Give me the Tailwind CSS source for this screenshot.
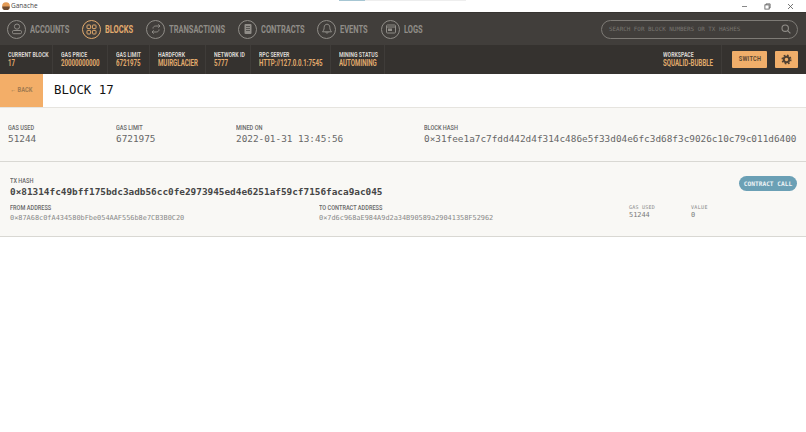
<!DOCTYPE html>
<html lang="en">
<head>
  <meta charset="UTF-8" />
  <title>Ganache</title>
  <script src="https://cdn.jsdelivr.net/npm/@tailwindcss/browser@4"></script>
</head>
<body class="h-[432px] w-[806px] overflow-hidden bg-white font-['Roboto',sans-serif]">
<div class="opacity-[.99]">
  <!-- title bar -->
  <div class="relative flex h-[12px] items-center bg-white">
    <svg class="ml-[2px] h-[8px] w-[8px]" viewBox="0 0 10 10"><circle cx="5" cy="5" r="4.8" fill="#e39a55"/><path d="M.2 5.6h9.6a4.8 4.8 0 0 1-9.6 0z" fill="#6d4a30"/></svg>
    <span class="ml-[1px] font-['Open_Sans',sans-serif] text-[6.5px] text-[#444]">Ganache</span>
    <div class="absolute top-0 left-[339px] flex h-[1px]">
      <div class="w-[26px] bg-[#a5c6d3]"></div>
      <div class="w-[101px] bg-[#eeeeee]"></div>
    </div>
    <div class="ml-auto flex items-center">
      <svg class="h-[7px] w-[7px]" viewBox="0 0 7 7" fill="none" stroke="#888"><path d="M1 3.5h5"/></svg>
      <svg class="ml-[16px] h-[7px] w-[7px]" viewBox="0 0 7 7" fill="none" stroke="#555" stroke-width=".8"><rect x=".9" y="1.9" width="4.2" height="4.2"/><path d="M2 1.9V.9h4.1V5h-1"/></svg>
      <svg class="mr-[12px] ml-[16px] h-[7px] w-[7px]" viewBox="0 0 7 7" fill="none" stroke="#555" stroke-width=".8"><path d="M1 1l5 5M6 1L1 6"/></svg>
    </div>
  </div>

  <!-- nav -->
  <div class="flex h-[33px] items-center justify-between border-t border-[#35322f] bg-[#3f3c39] pr-[8px] pl-[7px]">
    <div class="flex items-center text-[10px] font-bold text-[#8f8c87]">
      <div class="flex w-[75px] items-center gap-[4px]">
        <div class="flex h-[19px] w-[19px] shrink-0 items-center justify-center rounded-full border border-[#8f8c87]">
          <svg class="h-[12px] w-[12px]" viewBox="0 0 12 12" fill="none" stroke="#8f8c87"><circle cx="6" cy="3.6" r="2.6"/><rect x="1.5" y="7.5" width="9" height="3.2" rx="1.2"/></svg>
        </div>
        <span class="origin-left scale-x-[.75] whitespace-nowrap">ACCOUNTS</span>
      </div>
      <div class="flex w-[64px] items-center gap-[4px] text-[#e2aa6c]">
        <div class="flex h-[19px] w-[19px] shrink-0 items-center justify-center rounded-full border border-[#e2aa6c]">
          <svg class="h-[11px] w-[11px]" viewBox="0 0 11 11" fill="none" stroke="#e2aa6c"><rect x="1" y="1" width="3.6" height="3.6" rx=".7"/><rect x="6.4" y="1" width="3.6" height="3.6" rx=".7"/><rect x="1" y="6.4" width="3.6" height="3.6" rx=".7"/><rect x="6.4" y="6.4" width="3.6" height="3.6" rx=".7"/></svg>
        </div>
        <span class="origin-left scale-x-[.75] whitespace-nowrap">BLOCKS</span>
      </div>
      <div class="flex w-[92px] items-center gap-[4px]">
        <div class="flex h-[19px] w-[19px] shrink-0 items-center justify-center rounded-full border border-[#8f8c87]">
          <svg class="h-[12px] w-[12px]" viewBox="0 0 12 12" fill="none" stroke="#8f8c87"><path d="M3 5.5C3 3.8 4.2 3 5.8 3H10M8.3 1.3 10 3 8.3 4.7M9 6.5C9 8.2 7.8 9 6.2 9H2M3.7 7.3 2 9l1.7 1.7"/></svg>
        </div>
        <span class="origin-left scale-x-[.75] whitespace-nowrap">TRANSACTIONS</span>
      </div>
      <div class="flex w-[79px] items-center gap-[4px]">
        <div class="flex h-[19px] w-[19px] shrink-0 items-center justify-center rounded-full border border-[#8f8c87]">
          <svg class="h-[12px] w-[12px]" viewBox="0 0 12 12"><rect x="2.5" y="1" width="7" height="10" rx="1" fill="#8f8c87"/><path d="M4 3.5h4M4 5.5h4M4 7.5h4" stroke="#3f3c39" stroke-width=".7"/></svg>
        </div>
        <span class="origin-left scale-x-[.75] whitespace-nowrap">CONTRACTS</span>
      </div>
      <div class="flex w-[64px] items-center gap-[4px]">
        <div class="flex h-[19px] w-[19px] shrink-0 items-center justify-center rounded-full border border-[#8f8c87]">
          <svg class="h-[12px] w-[12px]" viewBox="0 0 12 12" fill="none" stroke="#8f8c87"><path d="M6 1.2C4.2 1.2 3.2 2.6 3.2 4.3c0 2.6-1.2 3.7-1.7 4.5h9c-.5-.8-1.7-1.9-1.7-4.5C8.8 2.6 7.8 1.2 6 1.2zM4.8 9.2c.2 1.3 2.2 1.3 2.4 0"/></svg>
        </div>
        <span class="origin-left scale-x-[.75] whitespace-nowrap">EVENTS</span>
      </div>
      <div class="flex items-center gap-[4px]">
        <div class="flex h-[19px] w-[19px] shrink-0 items-center justify-center rounded-full border border-[#8f8c87]">
          <svg class="h-[12px] w-[12px]" viewBox="0 0 12 12" fill="none" stroke="#8f8c87"><rect x="1.5" y="2" width="9" height="8" rx=".8"/><path d="M1.5 4h9"/><rect x="3" y="5.5" width="4" height="2.5" fill="#8f8c87" stroke="none"/></svg>
        </div>
        <span class="origin-left scale-x-[.75] whitespace-nowrap">LOGS</span>
      </div>
    </div>
    <div class="flex h-[19px] w-[197px] items-center justify-between rounded-full border border-[#7d7a75] pr-[6px] pl-[7px]">
      <span class="font-['DejaVu_Sans_Mono',monospace] text-[5.9px] text-[#77746f]">SEARCH FOR BLOCK NUMBERS OR TX HASHES</span>
      <svg class="h-[10px] w-[10px]" viewBox="0 0 10 10" fill="none" stroke="#8f8c87" stroke-width="1.1"><circle cx="4.2" cy="4.2" r="3.2"/><path d="M6.6 6.6 9.4 9.4"/></svg>
    </div>
  </div>

  <!-- status bar -->
  <div class="flex h-[29px] items-center justify-between bg-[#33302d]">
    <div class="flex h-full items-center font-bold">
      <div class="flex h-full w-[53px] flex-col justify-center border-r border-[#3d3a37] pl-[8px]">
        <span class="origin-left scale-x-[.8] text-[6.5px] leading-[7px] whitespace-nowrap text-[#d8d5cf]">CURRENT BLOCK</span>
        <span class="origin-left scale-x-[.72] text-[8.5px] leading-[9px] whitespace-nowrap text-[#e2aa6c]">17</span>
      </div>
      <div class="flex h-full w-[55px] flex-col justify-center border-r border-[#3d3a37] pl-[8px]">
        <span class="origin-left scale-x-[.8] text-[6.5px] leading-[7px] whitespace-nowrap text-[#d8d5cf]">GAS PRICE</span>
        <span class="origin-left scale-x-[.72] text-[8.5px] leading-[9px] whitespace-nowrap text-[#e2aa6c]">20000000000</span>
      </div>
      <div class="flex h-full w-[42px] flex-col justify-center border-r border-[#3d3a37] pl-[8px]">
        <span class="origin-left scale-x-[.8] text-[6.5px] leading-[7px] whitespace-nowrap text-[#d8d5cf]">GAS LIMIT</span>
        <span class="origin-left scale-x-[.72] text-[8.5px] leading-[9px] whitespace-nowrap text-[#e2aa6c]">6721975</span>
      </div>
      <div class="flex h-full w-[56px] flex-col justify-center border-r border-[#3d3a37] pl-[8px]">
        <span class="origin-left scale-x-[.8] text-[6.5px] leading-[7px] whitespace-nowrap text-[#d8d5cf]">HARDFORK</span>
        <span class="origin-left scale-x-[.72] text-[8.5px] leading-[9px] whitespace-nowrap text-[#e2aa6c]">MUIRGLACIER</span>
      </div>
      <div class="flex h-full w-[45px] flex-col justify-center border-r border-[#3d3a37] pl-[8px]">
        <span class="origin-left scale-x-[.8] text-[6.5px] leading-[7px] whitespace-nowrap text-[#d8d5cf]">NETWORK ID</span>
        <span class="origin-left scale-x-[.72] text-[8.5px] leading-[9px] whitespace-nowrap text-[#e2aa6c]">5777</span>
      </div>
      <div class="flex h-full w-[80px] flex-col justify-center border-r border-[#3d3a37] pl-[8px]">
        <span class="origin-left scale-x-[.8] text-[6.5px] leading-[7px] whitespace-nowrap text-[#d8d5cf]">RPC SERVER</span>
        <span class="origin-left scale-x-[.72] text-[8.5px] leading-[9px] whitespace-nowrap text-[#e2aa6c]">HTTP://127.0.0.1:7545</span>
      </div>
      <div class="flex h-full w-[54px] flex-col justify-center border-r border-[#3d3a37] pl-[8px]">
        <span class="origin-left scale-x-[.8] text-[6.5px] leading-[7px] whitespace-nowrap text-[#d8d5cf]">MINING STATUS</span>
        <span class="origin-left scale-x-[.72] text-[8.5px] leading-[9px] whitespace-nowrap text-[#e2aa6c]">AUTOMINING</span>
      </div>
    </div>
    <div class="flex h-full items-center pr-[8px] font-bold">
      <div class="flex h-full w-[58px] flex-col justify-center">
        <span class="origin-left scale-x-[.8] text-[6.5px] leading-[7px] whitespace-nowrap text-[#d8d5cf]">WORKSPACE</span>
        <span class="origin-left scale-x-[.72] text-[8.5px] leading-[9px] whitespace-nowrap text-[#e2aa6c]">SQUALID-BUBBLE</span>
      </div>
      <div class="flex h-full items-center border-l border-[#3d3a37] pl-[10px]">
        <button class="flex h-[17px] w-[35px] items-center justify-center rounded-[1px] bg-[#f0ae69] text-[#5c4630]"><span class="scale-x-[.8] text-[7px] tracking-[0.3px] whitespace-nowrap">SWITCH</span></button>
        <button class="ml-[8px] flex h-[17px] w-[23px] items-center justify-center rounded-[1px] bg-[#f0ae69]">
          <svg class="h-[11px] w-[11px]" viewBox="0 0 12 12" fill="none" stroke="#4f3f30"><circle cx="6" cy="6" r="3" stroke-width="2.2"/><circle cx="6" cy="6" r="4.7" stroke-width="1.6" stroke-dasharray="1.85 1.84"/></svg>
        </button>
      </div>
    </div>
  </div>

  <!-- header row -->
  <div class="flex h-[33px] items-center bg-white">
    <button class="flex h-full w-[43px] items-center justify-center bg-[#f3ae67] text-[#a1794f]"><span class="scale-x-[.82] text-[7px] font-bold whitespace-nowrap">← BACK</span></button>
    <h1 class="ml-[11px] font-['DejaVu_Sans_Mono',monospace] text-[12.4px] text-[#111]">BLOCK 17</h1>
  </div>

  <!-- block details -->
  <div class="flex h-[55px] items-center border-t border-b border-t-[#e6e4df] border-b-[#d9d8d3] bg-[#f9f8f5] pl-[8px]">
    <div class="w-[108px]">
      <div class="origin-left scale-x-[.8] text-[7px] leading-[9px] font-medium whitespace-nowrap text-[#666]">GAS USED</div>
      <div class="font-['DejaVu_Sans_Mono',monospace] text-[9.4px] leading-[12px] text-[#666]">51244</div>
    </div>
    <div class="w-[120px]">
      <div class="origin-left scale-x-[.8] text-[7px] leading-[9px] font-medium whitespace-nowrap text-[#666]">GAS LIMIT</div>
      <div class="font-['DejaVu_Sans_Mono',monospace] text-[9.4px] leading-[12px] text-[#666]">6721975</div>
    </div>
    <div class="w-[188px]">
      <div class="origin-left scale-x-[.8] text-[7px] leading-[9px] font-medium whitespace-nowrap text-[#666]">MINED ON</div>
      <div class="font-['DejaVu_Sans_Mono',monospace] text-[9.4px] leading-[12px] text-[#666]">2022-01-31 13:45:56</div>
    </div>
    <div>
      <div class="origin-left scale-x-[.8] text-[7px] leading-[9px] font-medium whitespace-nowrap text-[#666]">BLOCK HASH</div>
      <div class="font-['DejaVu_Sans_Mono',monospace] text-[9.4px] leading-[12px] text-[#666]">0×31fee1a7c7fdd442d4f314c486e5f33d04e6fc3d68f3c9026c10c79c011d6400</div>
    </div>
  </div>

  <!-- transaction -->
  <div class="h-[75px] border-b border-[#d9d8d3] bg-[#f9f8f5] pt-[15px] pr-[9px] pl-[10px]">
    <div class="flex items-start justify-between">
      <div>
        <div class="origin-left scale-x-[.8] text-[7px] leading-[9px] font-medium whitespace-nowrap text-[#666]">TX HASH</div>
        <div class="font-['DejaVu_Sans_Mono',monospace] text-[9.4px] leading-[12px] font-bold text-[#444]">0×81314fc49bff175bdc3adb56cc0fe2973945ed4e6251af59cf7156faca9ac045</div>
      </div>
      <div class="-mt-[1px] flex h-[15px] w-[58px] items-center justify-center rounded-full bg-[#6a9fb5] font-['DejaVu_Sans_Mono',monospace] text-[6.2px] font-bold whitespace-nowrap text-[#eef4f6]">CONTRACT CALL</div>
    </div>
    <div class="mt-[6px] flex items-start">
      <div class="w-[309px]">
        <div class="origin-left scale-x-[.8] text-[7px] leading-[9px] font-medium whitespace-nowrap text-[#666]">FROM ADDRESS</div>
        <div class="mt-[1px] font-['DejaVu_Sans_Mono',monospace] text-[6.9px] leading-[9px] text-[#888]">0×87A68c0fA434580bFbe054AAF556b8e7CB3B0C20</div>
      </div>
      <div class="w-[310px]">
        <div class="origin-left scale-x-[.8] text-[7px] leading-[9px] font-medium whitespace-nowrap text-[#666]">TO CONTRACT ADDRESS</div>
        <div class="mt-[1px] font-['DejaVu_Sans_Mono',monospace] text-[6.9px] leading-[9px] text-[#888]">0×7d6c968aE984A9d2a34B90589a29041358F52962</div>
      </div>
      <div class="w-[62px]">
        <div class="font-['DejaVu_Sans_Mono',monospace] text-[5px] leading-[7px] tracking-[0.25px] text-[#888]">GAS USED</div>
        <div class="font-['DejaVu_Sans_Mono',monospace] text-[6.9px] leading-[9px] text-[#777]">51244</div>
      </div>
      <div>
        <div class="font-['DejaVu_Sans_Mono',monospace] text-[5px] leading-[7px] tracking-[0.35px] text-[#888]">VALUE</div>
        <div class="font-['DejaVu_Sans_Mono',monospace] text-[6.9px] leading-[9px] text-[#777]">0</div>
      </div>
    </div>
  </div>
</div>
</body>
</html>
